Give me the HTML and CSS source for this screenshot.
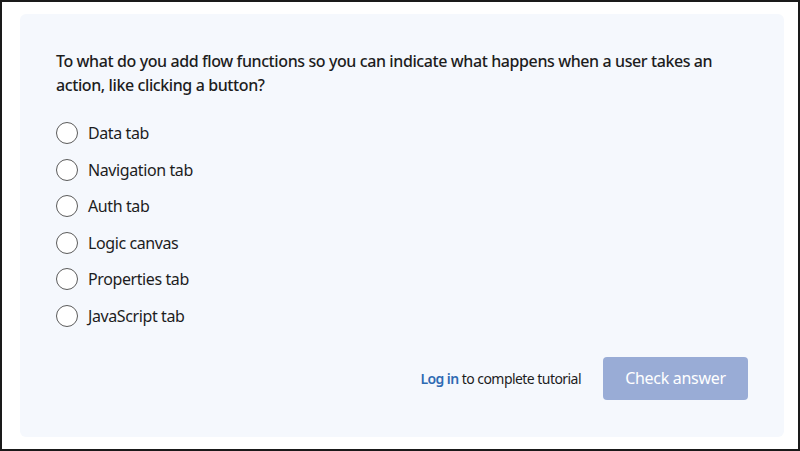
FILE: index.html
```html
<!DOCTYPE html>
<html>
<head>
<meta charset="utf-8">
<link rel="stylesheet" href="styles.css">
</head>
<body>
<div class="frame">
  <div class="card">
    <p class="question">To what do you add flow functions so you can indicate what happens when a user takes an action, like clicking a button?</p>
    <ul class="options">
      <li class="option"><span class="radio"></span><span class="label">Data tab</span></li>
      <li class="option"><span class="radio"></span><span class="label">Navigation tab</span></li>
      <li class="option"><span class="radio"></span><span class="label">Auth tab</span></li>
      <li class="option"><span class="radio"></span><span class="label">Logic canvas</span></li>
      <li class="option"><span class="radio"></span><span class="label">Properties tab</span></li>
      <li class="option"><span class="radio"></span><span class="label">JavaScript tab</span></li>
    </ul>
    <div class="footer">
      <span class="login-text"><a class="login" href="#">Log in</a> to complete tutorial</span>
      <button class="check" type="button">Check answer</button>
    </div>
  </div>
</div>
</body>
</html>
```
FILE: styles.css
```css
html, body {
  margin: 0;
  padding: 0;
  background: #ffffff;
}
body {
  font-family: "Noto Sans", "Open Sans", sans-serif;
  color: #1d1d1d;
}
.frame {
  box-sizing: border-box;
  width: 800px;
  height: 451px;
  border: 2px solid #1a1a1a;
  padding: 12px 14px 12px 18px;
}
.card {
  box-sizing: border-box;
  height: 423px;
  background: #f5f8fd;
  border-radius: 6px;
  padding: 35px 36px 0 36px;
  display: flex;
  flex-direction: column;
}
.question {
  margin: 0;
  font-size: 16px;
  line-height: 24px;
  font-weight: 500;
  letter-spacing: -0.4px;
  color: #1d1d1d;
}
.options {
  list-style: none;
  margin: 24px 0 0 0;
  padding: 0;
  display: flex;
  flex-direction: column;
  gap: 12.6px;
}
.option {
  display: flex;
  align-items: center;
  height: 24px;
  gap: 10px;
}
.radio {
  box-sizing: border-box;
  width: 22px;
  height: 22px;
  border: 1.4px solid #5b5b5b;
  border-radius: 50%;
  background: #ffffff;
  flex: none;
}
.label {
  font-size: 16px;
  line-height: 24px;
  letter-spacing: -0.4px;
  color: #1d1d1d;
}
.footer {
  margin-top: 29px;
  display: flex;
  justify-content: flex-end;
  align-items: center;
  gap: 22px;
}
.login-text {
  font-size: 14px;
  letter-spacing: -0.55px;
  color: #1d1d1d;
}
.login {
  color: #2e6ab3;
  font-weight: 600;
  text-decoration: none;
}
.check {
  width: 145px;
  height: 43px;
  border: none;
  border-radius: 4px;
  background: #99acd6;
  color: #ffffff;
  font-family: "Noto Sans", "Open Sans", sans-serif;
  font-size: 16px;
  letter-spacing: -0.3px;
}
```
